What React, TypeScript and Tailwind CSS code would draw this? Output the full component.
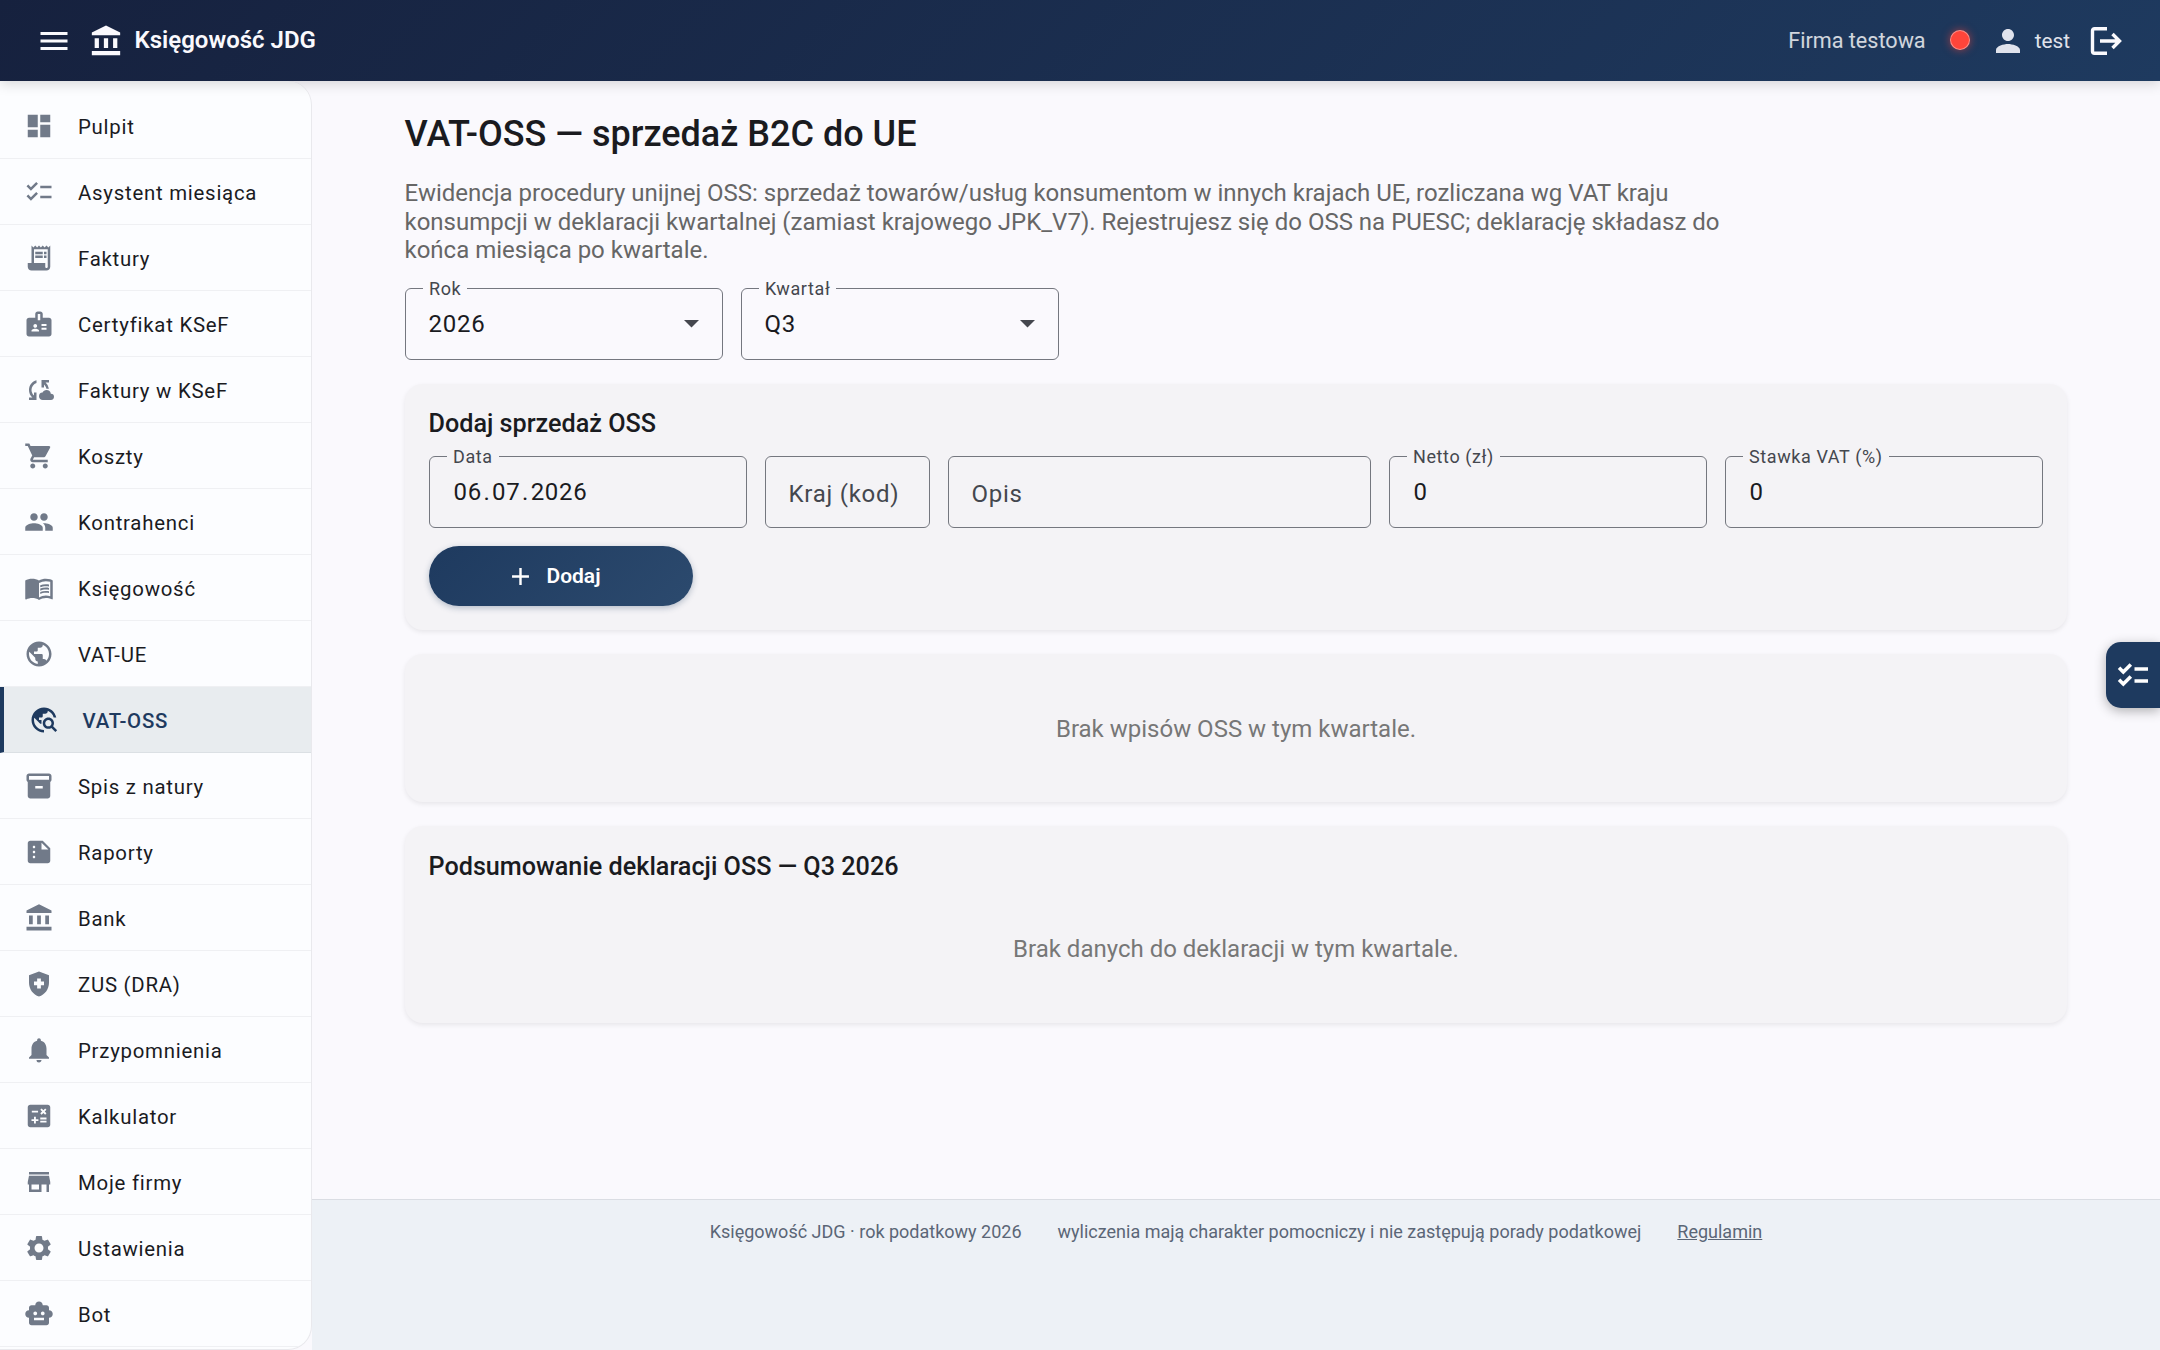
import type { ReactNode } from "react";
import type { IconType } from "react-icons";
import {
  MdAccountBalance,
  MdAdd,
  MdBadge,
  MdCalculate,
  MdChecklist,
  MdCloudSync,
  MdDashboard,
  MdHealthAndSafety,
  MdInventory2,
  MdMenu,
  MdMenuBook,
  MdNotifications,
  MdPeople,
  MdPerson,
  MdPublic,
  MdReceiptLong,
  MdSettings,
  MdShoppingCart,
  MdSmartToy,
  MdStore,
  MdSummarize,
  MdTravelExplore,
} from "react-icons/md";

interface NavItem {
  label: string;
  icon: IconType;
  active?: boolean;
}

const navItems: NavItem[] = [
  { label: "Pulpit", icon: MdDashboard },
  { label: "Asystent miesiąca", icon: MdChecklist },
  { label: "Faktury", icon: MdReceiptLong },
  { label: "Certyfikat KSeF", icon: MdBadge },
  { label: "Faktury w KSeF", icon: MdCloudSync },
  { label: "Koszty", icon: MdShoppingCart },
  { label: "Kontrahenci", icon: MdPeople },
  { label: "Księgowość", icon: MdMenuBook },
  { label: "VAT-UE", icon: MdPublic },
  { label: "VAT-OSS", icon: MdTravelExplore, active: true },
  { label: "Spis z natury", icon: MdInventory2 },
  { label: "Raporty", icon: MdSummarize },
  { label: "Bank", icon: MdAccountBalance },
  { label: "ZUS (DRA)", icon: MdHealthAndSafety },
  { label: "Przypomnienia", icon: MdNotifications },
  { label: "Kalkulator", icon: MdCalculate },
  { label: "Moje firmy", icon: MdStore },
  { label: "Ustawienia", icon: MdSettings },
  { label: "Bot", icon: MdSmartToy },
];

function LogoutIcon() {
  return (
    <svg width="32" height="30" viewBox="0 0 32 30" fill="none" stroke="currentColor" strokeWidth="3.4">
      <path d="M17 2.7H4.5a2 2 0 0 0-2 2v20.600a2 2 0 0 0 2 2H17" />
      <path d="M10 15H29M22.500 8l7 7-7 7" />
    </svg>
  );
}

// heavier checklist for the side tab
function TabChecklistIcon() {
  return (
    <svg width="36" height="36" viewBox="0 0 24 24" fill="none" stroke="currentColor" strokeWidth="2.35">
      <path d="M13 8h9M13 16h9M2.700 7.200l2.850 2.850 5-5M2.700 15.200l2.850 2.850 5-5" />
    </svg>
  );
}

function TopBar() {
  return (
    <header className="relative z-10 flex h-[81px] shrink-0 items-center bg-linear-135 from-[#16213e] to-[#1e3a5f] pl-9 pr-[38px] text-[#faf9fd] shadow-[0_3px_12px_rgba(0,0,0,0.15)]">
      <MdMenu size={36} />
      <MdAccountBalance size={34} className="ml-[17px]" />
      <span className="ml-[11.5px] pb-px text-[24px] font-semibold">Księgowość JDG</span>
      <div className="ml-auto flex items-center">
        <span className="pt-[2px] text-[21.6px] text-white/80">Firma testowa</span>
        <span className="ml-6 mb-[2px] size-5 rounded-full border border-white/40 bg-[#ff453a] shadow-[0_0_9px_rgba(255,69,58,0.6)]" />
        <MdPerson size={36} className="ml-5 text-[#e0e3ec]" />
        <span className="ml-[9px] pt-[2px] text-[20.8px] text-[#e0e3ec]">test</span>
        <span className="ml-5">
          <LogoutIcon />
        </span>
      </div>
    </header>
  );
}

function Sidebar() {
  return (
    <nav className="h-[1269px] w-[312px] shrink-0 overflow-hidden rounded-r-[24px] border-r border-b border-[#e9e9ed] bg-[#fcfdff] pt-3">
      {navItems.map(({ label, icon: Icon, active }) => (
        <a
          key={label}
          className={`flex h-[66px] items-center gap-6 border-b text-[20.4px] tracking-[0.75px] ${
            active
              ? "border-b-[#dbe0e4] border-l-4 border-l-[#1e3a5f] bg-[#e8ecef] pl-[24.5px] font-medium text-[#1e3a5f]"
              : "border-b-[#eff0f3] pl-6 text-[#1a1b1f]"
          }`}
        >
          <Icon size={30} className={active ? "text-[#1e3a5f]" : "text-[#717a89]"} />
          <span className="pt-[3px]">{label}</span>
        </a>
      ))}
    </nav>
  );
}

interface FieldProps {
  label: string;
  value?: ReactNode;
  select?: boolean;
  width?: string;
  // colour behind the floating label, hides the outline under it
  surface?: string;
}

function Field({ label, value, select = false, width = "w-[318px]", surface = "bg-[#f4f3f6]" }: FieldProps) {
  return (
    <div className={`relative flex h-[72px] items-center rounded-[6px] border border-[#74777f] px-[23px] tracking-[0.75px] ${width}`}>
      {value ? (
        <>
          <span className={`absolute -top-3 left-[17.5px] px-1.5 text-[18px] leading-6 tracking-[0.6px] text-[#44474e] ${surface}`}>
            {label}
          </span>
          <span className={`text-[24px] text-[#1a1b1f] ${select ? "" : "pl-px"}`}>{value}</span>
        </>
      ) : (
        <span className="pt-[5px] text-[24px] text-[#44474e]">{label}</span>
      )}
      {select && (
        <svg width="15" height="8" viewBox="0 0 15 8" className="ml-auto mt-px fill-[#44474e]">
          <path d="M0 0h15L7.500 7.500z" />
        </svg>
      )}
    </div>
  );
}

function DateValue({ day, month, year }: { day: string; month: string; year: string }) {
  return (
    <span>
      {day}
      <span className="mx-[1.5px]">.</span>
      {month}
      <span className="mx-[1.5px]">.</span>
      {year}
    </span>
  );
}

function Card({ className = "", children }: { className?: string; children: ReactNode }) {
  return (
    <section className={`rounded-[18px] bg-[#f4f3f6] px-6 shadow-[0_2px_5px_rgba(0,0,0,0.08)] ${className}`}>
      {children}
    </section>
  );
}

export default function App() {
  return (
    <div className="relative flex h-[1350px] w-[2160px] flex-col overflow-hidden bg-[#faf9fd] font-['Roboto',sans-serif] text-[#1a1b1f]">
      <TopBar />
      <div className="flex min-h-0 flex-1">
        <Sidebar />
        <div className="flex flex-1 flex-col">
          <main className="flex-1 pl-[92.5px] pt-[29px]">
            <h1 className="text-[36px] leading-[48px] font-medium">VAT-OSS — sprzedaż B2C do UE</h1>
            <p className="mt-[21px] w-[1325px] text-[24px] leading-[28.5px] text-[#666]">
              Ewidencja procedury unijnej OSS: sprzedaż towarów/usług konsumentom w innych krajach UE, rozliczana wg VAT
              kraju konsumpcji w deklaracji kwartalnej (zamiast krajowego JPK_V7). Rejestrujesz się do OSS na PUESC;
              deklarację składasz do końca miesiąca po kwartale.
            </p>
            <div className="mt-[23px] flex gap-[18px]">
              <Field label="Rok" value="2026" select surface="bg-[#faf9fd]" />
              <Field label="Kwartał" value="Q3" select surface="bg-[#faf9fd]" />
            </div>
            <Card className="mt-6 h-[246px] w-[1662px] pt-[25px]">
              <h2 className="text-[25.2px] leading-[30px] font-medium">Dodaj sprzedaż OSS</h2>
              <div className="mt-[17px] flex gap-[18px]">
                <Field label="Data" value={<DateValue day="06" month="07" year="2026" />} />
                <Field label="Kraj (kod)" width="w-[165px]" />
                <Field label="Opis" width="flex-1" />
                <Field label="Netto (zł)" value="0" />
                <Field label="Stawka VAT (%)" value="0" />
              </div>
              <button className="mt-[18px] flex h-[60px] w-[264px] items-center justify-center gap-[11px] rounded-full bg-linear-135 from-[#1e3a5f] to-[#2c4a6e] pr-[14px] text-[21px] font-semibold text-white shadow-[0_2px_6px_rgba(30,58,95,0.3)]">
                <MdAdd size={29} className="mt-0.5" />
                <span className="pt-[3px]">Dodaj</span>
              </button>
            </Card>
            <Card className="mt-6 flex h-[148px] w-[1662px] items-center justify-center">
              <p className="pt-[3px] pl-px text-[24px] text-[#777]">Brak wpisów OSS w tym kwartale.</p>
            </Card>
            <Card className="mt-6 h-[197px] w-[1662px] pt-[26px]">
              <h2 className="text-[25.2px] leading-[30px] font-medium">Podsumowanie deklaracji OSS — Q3 2026</h2>
              <p className="mt-[53px] pl-px text-center text-[24px] leading-[28px] text-[#777]">
                Brak danych do deklaracji w tym kwartale.
              </p>
            </Card>
          </main>
          <footer className="flex h-[151px] justify-center gap-9 border-t border-[#dadde3] bg-[#edf1f6] pt-[21px] text-[18px] leading-[22px] text-[#5b6676]">
            <span>Księgowość JDG · rok podatkowy 2026</span>
            <span>wyliczenia mają charakter pomocniczy i nie zastępują porady podatkowej</span>
            <a className="underline">Regulamin</a>
          </footer>
        </div>
      </div>
      <button className="absolute right-0 top-[642px] flex h-[66px] w-[54px] items-center justify-center rounded-l-[15px] bg-[#1e3a5f] text-white shadow-[0_3px_12px_rgba(0,0,0,0.3)]">
        <TabChecklistIcon />
      </button>
    </div>
  );
}
